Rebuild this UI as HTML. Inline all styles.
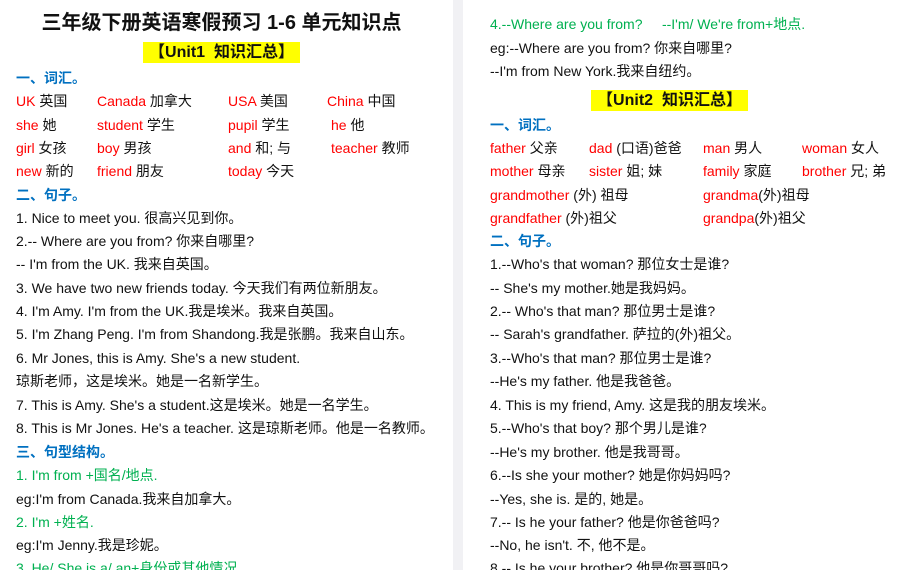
<!DOCTYPE html>
<html><head><meta charset="utf-8"><style>
html,body{margin:0;width:904px;height:570px;overflow:hidden}
body{background:#fff;font-family:"Liberation Sans","Noto Sans CJK SC",sans-serif;font-size:14px;color:#111;position:relative}
.gap{position:absolute;left:453px;top:0;width:10px;height:570px;background:#f1f1f4}
.l{position:absolute;white-space:nowrap;line-height:20px}
.r{color:#f00}.g{color:#00b050}.b{color:#0070c0;font-weight:bold}
.y{background:#ff0;font-weight:bold;font-size:16px;padding:2px 6px;line-height:23px}
</style></head><body>
<div class="gap"></div>
<div class="l" style="left:0;width:443px;text-align:center;top:11px;font-size:20px;font-weight:bold;line-height:24px">三年级下册英语寒假预习 1-6 单元知识点</div>
<div class="l" style="left:0;width:443px;text-align:center;top:41px;line-height:23px"><span class="y">【Unit1&nbsp; 知识汇总】</span></div>
<div class="l b" style="left:16px;top:68px">一、词汇。</div>
<div class="l" style="left:16px;top:91px"><span class="r">UK</span> 英国</div>
<div class="l" style="left:97px;top:91px"><span class="r">Canada</span> 加拿大</div>
<div class="l" style="left:228px;top:91px"><span class="r">USA</span> 美国</div>
<div class="l" style="left:327px;top:91px"><span class="r">China</span> 中国</div>
<div class="l" style="left:16px;top:115px"><span class="r">she</span> 她</div>
<div class="l" style="left:97px;top:115px"><span class="r">student</span> 学生</div>
<div class="l" style="left:228px;top:115px"><span class="r">pupil</span> 学生</div>
<div class="l" style="left:331px;top:115px"><span class="r">he</span> 他</div>
<div class="l" style="left:16px;top:138px"><span class="r">girl</span> 女孩</div>
<div class="l" style="left:97px;top:138px"><span class="r">boy</span> 男孩</div>
<div class="l" style="left:228px;top:138px"><span class="r">and</span> 和; 与</div>
<div class="l" style="left:331px;top:138px"><span class="r">teacher</span> 教师</div>
<div class="l" style="left:16px;top:161px"><span class="r">new</span> 新的</div>
<div class="l" style="left:97px;top:161px"><span class="r">friend</span> 朋友</div>
<div class="l" style="left:228px;top:161px"><span class="r">today</span> 今天</div>
<div class="l b" style="left:16px;top:185px">二、句子。</div>
<div class="l" style="left:16px;top:208px">1. Nice to meet you. 很高兴见到你。</div>
<div class="l" style="left:16px;top:231px">2.-- Where are you from? 你来自哪里?</div>
<div class="l" style="left:16px;top:254px">-- I'm from the UK. 我来自英国。</div>
<div class="l" style="left:16px;top:278px">3. We have two new friends today. 今天我们有两位新朋友。</div>
<div class="l" style="left:16px;top:301px">4. I'm Amy. I'm from the UK.我是埃米。我来自英国。</div>
<div class="l" style="left:16px;top:324px">5. I'm Zhang Peng. I'm from Shandong.我是张鹏。我来自山东。</div>
<div class="l" style="left:16px;top:348px">6. Mr Jones, this is Amy. She's a new student.</div>
<div class="l" style="left:16px;top:371px">琼斯老师，这是埃米。她是一名新学生。</div>
<div class="l" style="left:16px;top:395px">7. This is Amy. She's a student.这是埃米。她是一名学生。</div>
<div class="l" style="left:16px;top:418px">8. This is Mr Jones. He's a teacher. 这是琼斯老师。他是一名教师。</div>
<div class="l b" style="left:16px;top:442px">三、句型结构。</div>
<div class="l g" style="left:16px;top:465px">1. I'm from +国名/地点.</div>
<div class="l" style="left:16px;top:489px">eg:I'm from Canada.我来自加拿大。</div>
<div class="l g" style="left:16px;top:512px">2. I'm +姓名.</div>
<div class="l" style="left:16px;top:535px">eg:I'm Jenny.我是珍妮。</div>
<div class="l g" style="left:16px;top:558px">3. He/ She is a/ an+身份或其他情况.</div>

<div class="l g" style="left:490px;top:14px">4.--Where are you from? &nbsp;&nbsp;&nbsp;&nbsp;--I'm/ We're from+地点.</div>
<div class="l" style="left:490px;top:38px">eg:--Where are you from? 你来自哪里?</div>
<div class="l" style="left:490px;top:61px">--I'm from New York.我来自纽约。</div>
<div class="l" style="left:463px;width:413px;text-align:center;top:89px;line-height:23px"><span class="y">【Unit2&nbsp; 知识汇总】</span></div>
<div class="l b" style="left:490px;top:115px">一、词汇。</div>
<div class="l" style="left:490px;top:138px"><span class="r">father</span> 父亲</div>
<div class="l" style="left:589px;top:138px"><span class="r">dad</span> (口语)爸爸</div>
<div class="l" style="left:703px;top:138px"><span class="r">man</span> 男人</div>
<div class="l" style="left:802px;top:138px"><span class="r">woman</span> 女人</div>
<div class="l" style="left:490px;top:161px"><span class="r">mother</span> 母亲</div>
<div class="l" style="left:589px;top:161px"><span class="r">sister</span> 姐; 妹</div>
<div class="l" style="left:703px;top:161px"><span class="r">family</span> 家庭</div>
<div class="l" style="left:802px;top:161px"><span class="r">brother</span> 兄; 弟</div>
<div class="l" style="left:490px;top:185px"><span class="r">grandmother</span> (外) 祖母</div>
<div class="l" style="left:703px;top:185px"><span class="r">grandma</span>(外)祖母</div>
<div class="l" style="left:490px;top:208px"><span class="r">grandfather</span> (外)祖父</div>
<div class="l" style="left:703px;top:208px"><span class="r">grandpa</span>(外)祖父</div>
<div class="l b" style="left:490px;top:231px">二、句子。</div>
<div class="l" style="left:490px;top:254px">1.--Who's that woman? 那位女士是谁?</div>
<div class="l" style="left:490px;top:278px">-- She's my mother.她是我妈妈。</div>
<div class="l" style="left:490px;top:301px">2.-- Who's that man? 那位男士是谁?</div>
<div class="l" style="left:490px;top:324px">-- Sarah's grandfather. 萨拉的(外)祖父。</div>
<div class="l" style="left:490px;top:348px">3.--Who's that man? 那位男士是谁?</div>
<div class="l" style="left:490px;top:371px">--He's my father. 他是我爸爸。</div>
<div class="l" style="left:490px;top:395px">4. This is my friend, Amy. 这是我的朋友埃米。</div>
<div class="l" style="left:490px;top:418px">5.--Who's that boy? 那个男儿是谁?</div>
<div class="l" style="left:490px;top:442px">--He's my brother. 他是我哥哥。</div>
<div class="l" style="left:490px;top:465px">6.--Is she your mother? 她是你妈妈吗?</div>
<div class="l" style="left:490px;top:489px">--Yes, she is. 是的, 她是。</div>
<div class="l" style="left:490px;top:512px">7.-- Is he your father? 他是你爸爸吗?</div>
<div class="l" style="left:490px;top:535px">--No, he isn't. 不, 他不是。</div>
<div class="l" style="left:490px;top:558px">8.-- Is he your brother? 他是你哥哥吗?</div>
</body></html>
